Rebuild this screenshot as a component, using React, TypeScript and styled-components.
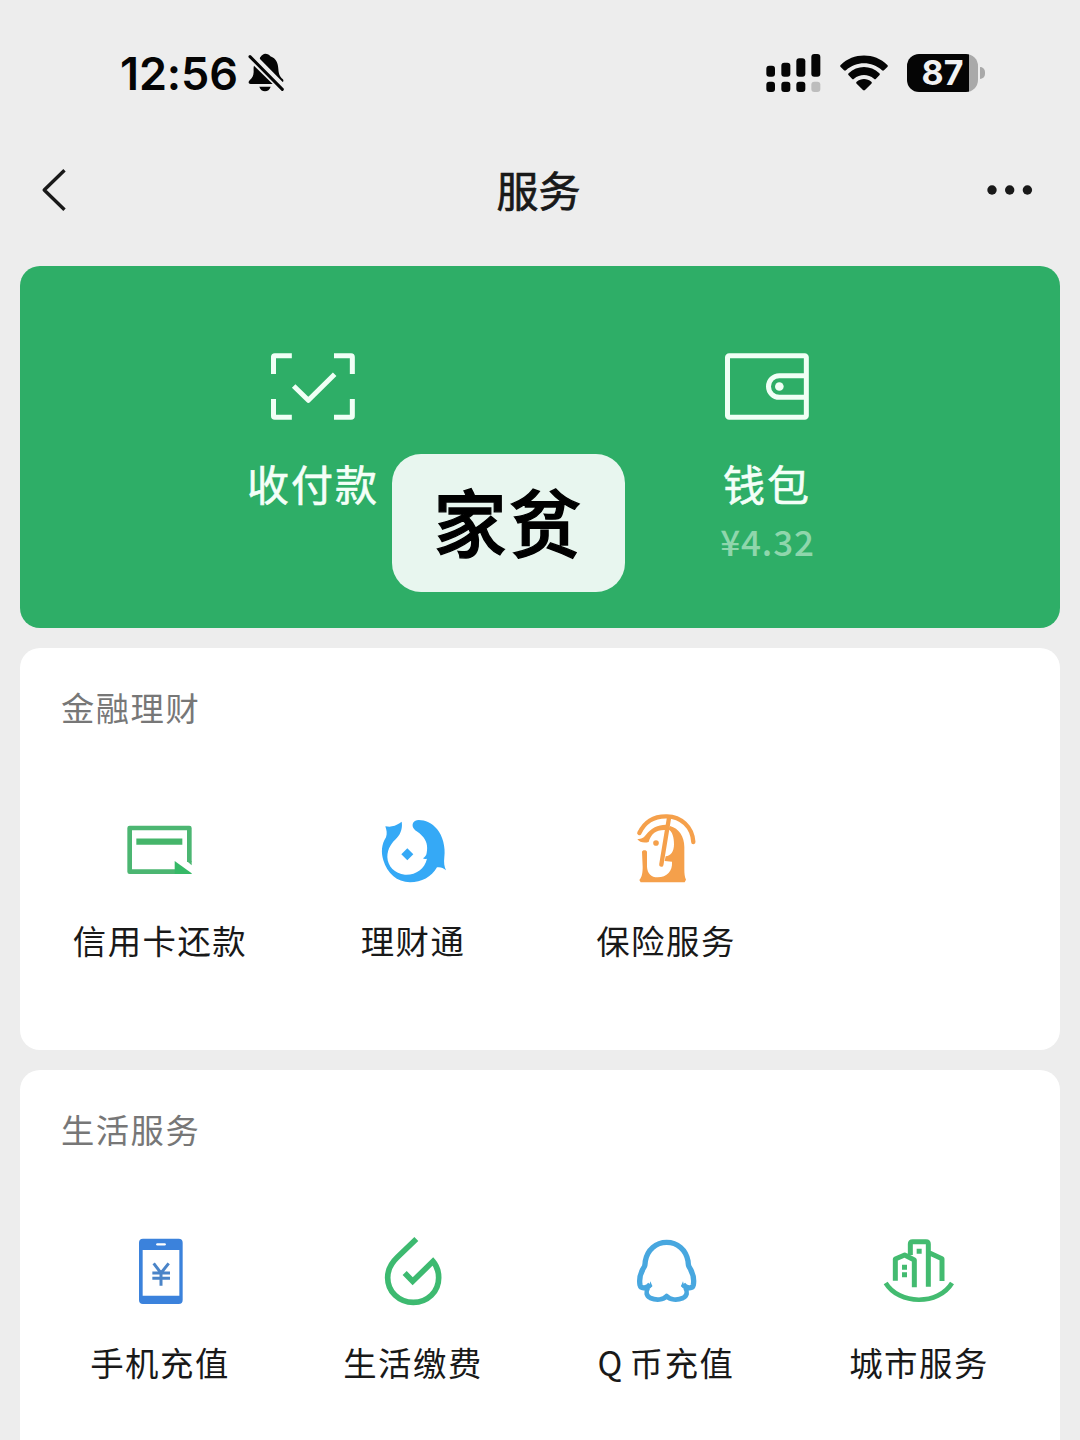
import React from "react";
import styled, { createGlobalStyle } from "styled-components";

const GlobalStyle = createGlobalStyle`
  * { box-sizing: border-box; }
  body {
    margin: 0;
    background: #ededed;
    font-family: "Noto Sans CJK SC", "Noto Sans", sans-serif;
    color: #191919;
  }
  svg { display: block; overflow: visible; flex: none; }
`;

const Screen = styled.main`
  width: 1080px;
  height: 1440px;
  overflow: hidden;
  background: #ededed;
  display: flex;
  flex-direction: column;
`;

const StatusBar = styled.header`
  flex: none;
  height: 146px;
  padding: 0 95px 0 120px;
  display: flex;
  align-items: center;
  justify-content: space-between;
  color: #050505;
`;

const StatusGroup = styled.div<{ $gap: number }>`
  display: flex;
  align-items: center;
  gap: ${(p) => p.$gap}px;
`;

const Clock = styled.span`
  width: 117px;
  font: 600 45px/50px Inter, sans-serif;
  letter-spacing: -0.1px;
  white-space: nowrap;
  margin-top: 2px;
`;

const Battery = styled.div`
  display: flex;
  align-items: center;
  gap: 2px;
`;

const BatteryBody = styled.div`
  width: 71px;
  height: 38px;
  border-radius: 12px;
  background: linear-gradient(to right, #050505 62px, #a9a9a9 62px);
  color: #f2f2f2;
  font: 700 34px/38px Inter, sans-serif;
  text-align: center;
`;

const BatteryTip = styled.div`
  width: 5px;
  height: 12px;
  border-radius: 0 6px 6px 0;
  background: #a9a9a9;
`;

const NavBar = styled.nav`
  flex: none;
  height: 120px;
  padding: 0 47px 32px 41px;
  display: grid;
  grid-template-columns: 60px 1fr 60px;
  align-items: center;
`;

const NavSlot = styled.div<{ $end?: boolean }>`
  display: flex;
  justify-content: ${(p) => (p.$end ? "flex-end" : "flex-start")};
`;

const Title = styled.h1`
  margin: 0;
  padding: 0 0 2px 3px;
  text-align: center;
  font-size: 42px;
  font-weight: 400;
  line-height: 60px;
  -webkit-text-stroke: 0.7px currentColor;
`;

const Cards = styled.div`
  flex: none;
  padding: 0 20px;
  display: flex;
  flex-direction: column;
  gap: 20px;
`;

const PayCard = styled.section`
  position: relative;
  height: 362px;
  padding: 86px 66px 0;
  border-radius: 20px;
  background: #2eae67;
  display: grid;
  grid-template-columns: 1fr 1fr;
`;

const PayItem = styled.div`
  display: flex;
  flex-direction: column;
  align-items: center;
  color: #f4fff8;
`;

const PayLabel = styled.span`
  margin-top: 32px;
  font-size: 42px;
  font-weight: 400;
  line-height: 60px;
  letter-spacing: 2px;
  -webkit-text-stroke: 0.6px currentColor;
`;

const Balance = styled.span`
  font-size: 35px;
  font-weight: 500;
  line-height: 56px;
  letter-spacing: 0.9px;
  margin-right: -1px;
  color: #8fd6ac;
`;

const Sticker = styled.div`
  position: absolute;
  left: 372px;
  top: 188px;
  width: 233px;
  height: 138px;
  border-radius: 29px;
  background: #e8f6ef;
  color: #000;
  font-size: 73px;
  font-weight: 500;
  line-height: 130px;
  letter-spacing: 2px;
  text-align: center;
  -webkit-text-stroke: 1.3px currentColor;
`;

const ServiceCard = styled.section<{ $height: number }>`
  height: ${(p) => p.$height}px;
  border-radius: 20px;
  background: #fff;
  padding: 35px 15px 0 13px;
`;

const SectionTitle = styled.h2`
  margin: 0 0 0 28px;
  font-size: 33.3px;
  font-weight: 400;
  line-height: 48px;
  letter-spacing: 1.5px;
  color: #777;
`;

const ServiceGrid = styled.div`
  display: grid;
  grid-template-columns: repeat(4, 1fr);
  padding-top: 69px;
`;

const Service = styled.div`
  display: flex;
  flex-direction: column;
  align-items: center;
  gap: 21px;
`;

const ServiceIcon = styled.div`
  height: 95px;
  display: flex;
  align-items: flex-start;
`;

const ServiceLabel = styled.span`
  font-size: 33.4px;
  line-height: 48px;
  letter-spacing: 1.5px;
  margin-right: -1px;
  word-spacing: -3px;
  white-space: nowrap;
`;

const BellOff = () => (
  <svg width="38" height="40" viewBox="0 0 114 120" fill="#050505">
    <path d="M52 2c7 0 12 3 15 8 18 7 23 20 24 38 1 17 5 23 13 30 3 3 3 7 0 9L36 18c-1-3 0-5 2-7 4-5 8-9 14-9Z" />
    <path d="M18 38 74 93H8c-7 0-8-7-3-11 8-7 11-13 12-25 0-8-1-13 1-19ZM34 101h34c-3 9-9 14-17 14s-14-5-17-14Z" />
    <path d="M6 11 103 109" fill="none" stroke="#050505" strokeWidth="9" strokeLinecap="round" />
  </svg>
);

const Signal = () => (
  <svg width="55" height="38" viewBox="0 0 165 114" fill="#050505">
    <rect x="1" y="35" width="26" height="33" rx="9" />
    <rect x="46" y="26" width="27" height="42" rx="9" />
    <rect x="91" y="13" width="27" height="55" rx="9" />
    <rect x="136" y="0" width="27" height="68" rx="9" />
    <rect x="1" y="83" width="26" height="31" rx="9" />
    <rect x="46" y="83" width="27" height="31" rx="9" />
    <rect x="91" y="83" width="27" height="31" rx="9" />
    <rect x="136" y="83" width="27" height="31" rx="9" fill="#bdbdbd" />
  </svg>
);

const Wifi = () => (
  <svg width="48" height="36" viewBox="0 0 144 108" fill="#050505">
    <path d="M2 30C40-8 104-8 142 30c2 2 2 4 0 6L132 46c-2 2-4 2-6 0-31-28-77-28-108 0-2 2-4 2-6 0L2 36c-2-2-2-4 0-6Z" />
    <path d="M26 55c26-25 66-25 92 0 2 2 2 4 0 6l-10 10c-2 2-4 2-6 0-18-15-42-15-60 0-2 2-4 2-6 0L26 61c-2-2-2-4 0-6Z" />
    <path d="M50 80c13-11 31-11 44 0 2 2 2 4 0 6L75 105c-2 2-4 2-6 0L50 86c-2-2-2-4 0-6Z" />
  </svg>
);

const Back = () => (
  <svg width="25" height="42" viewBox="0 0 25 42" fill="none" stroke="#191919" strokeWidth="3.4">
    <path d="M23.5 1.2 3.2 21 23.5 40.8" strokeLinejoin="round" />
  </svg>
);

const More = () => (
  <svg width="46" height="10" viewBox="0 0 46 10" fill="#191919">
    <circle cx="5" cy="5" r="4.7" />
    <circle cx="22.7" cy="5" r="4.7" />
    <circle cx="40.4" cy="5" r="4.7" />
  </svg>
);

const ScanPay = () => (
  <svg width="84" height="69" viewBox="0 0 252 207" fill="none" stroke="#f0fff6" strokeWidth="15" strokeLinejoin="round">
    <path d="M7.5 66V15q0-4 4-4h51M189 11h51q4 0 4 4v51M7.5 141v51q0 4 4 4h51M189 196h51q4 0 4-4v-51" />
    <path d="m68 102 44 43 79-78" strokeWidth="15" />
  </svg>
);

const Wallet = () => (
  <svg width="84" height="69" viewBox="0 0 252 207" fill="none" stroke="#f0fff6" strokeWidth="15">
    <rect x="7.5" y="11" width="236.5" height="185" rx="5" />
    <path d="M244 71h-81a32.5 32.5 0 0 0 0 65h81" />
    <circle cx="163" cy="103.5" r="13" fill="#f0fff6" stroke="none" />
  </svg>
);

const CreditCard = () => (
  <svg width="120" height="90" viewBox="0 0 360 270" fill="none" stroke="#4cb672" strokeWidth="14">
    <path d="M268 186V84H89v131h160" strokeLinejoin="round" />
    <path d="M261 184h14v12Z" fill="#4cb672" stroke="none" />
    <path d="M109 125h138" stroke="#45b56a" strokeWidth="19" />
    <path d="M224 183 275 220v2h-51Z" fill="#36b967" stroke="none" />
  </svg>
);

const Licaitong = () => (
  <svg width="100" height="100" viewBox="-4 0 300 300" fill="#35a9f6">
    <path d="M112 65C104 71 94 77 83 79 75 81 69 79 63 79 67 91 69 101 65 112 51 134 50 158 57 181 68 219 98 247 137 247 172 247 201 231 218 202 228 200 236 203 245 211 240 200 238 189 240 171 244 142 235 107 218 87 203 69 183 60 163 60 148 61 141 72 147 84 153 94 165 97 173 107 187 121 191 138 187 159 186 166 182 171 176 175 179 177 183 177 188 176 181 207 153 226 122 224 91 221 70 199 69 171 69 144 83 128 98 113 111 100 115 80 112 65Z" />
    <path d="m129 145 18 18-18 18-18-18Z" />
  </svg>
);

const Insurance = () => (
  <svg width="95" height="95" viewBox="-4 0 285 285" fill="none" stroke="#f5a04b" strokeLinecap="round" strokeLinejoin="round">
    <path d="M60 99C77 63 105 48 143 49c42 1 76 31 79 77" strokeWidth="13" />
    <path d="M149 54 126 194" strokeWidth="13" />
    <path
      d="M54 117c13 0 19-4 26-13 16-21 37-31 63-30l-2 16c-30-2-46 11-53 36-14 4-28 1-34-9Z"
      fill="#f5a04b" stroke="none"
    />
    <path
      d="M152 78c27 7 43 33 43 63v66c0 14 1 23 5 32l-4 8H64l-4-7c9-11 10-24 10-40l-2-44c0-7 15-7 15 0v44c1 20 12 32 32 32 28-1 45-18 43-47l-22-2 3-14c15-1 25-14 25-36 0-22-5-38-17-45Z"
      fill="#f5a04b" stroke="none"
    />
    <circle cx="110" cy="129" r="8.500" fill="#f5a04b" stroke="none" />
  </svg>
);

const PhoneTopUp = () => (
  <svg width="80" height="90" viewBox="-1 -9 240 270" fill="none">
    <path d="M68 41h107q12 0 12 12v172q0 12-12 12H68q-12 0-12-12V53q0-12 12-12ZM67 75v137h110V75Z" fill="#3b82dc" fillRule="evenodd" />
    <path d="M111 58h22" stroke="#fff" strokeWidth="7" strokeLinecap="round" />
    <path d="m100 115 22 29 23-29M122 144v38M96 144h53M96 160h53" stroke="#4a84c8" strokeWidth="9" />
  </svg>
);

const Utilities = () => (
  <svg width="90" height="90" viewBox="-6 -9 270 270" fill="none" stroke="#3dba70" strokeWidth="17">
    <path d="M139 42 82 97C60 118 53 137 53 158c0 42 34 74 77 74s76-32 76-74c0-20-6-36-17-49l-61 60-24-25" />
  </svg>
);

const Penguin = () => (
  <svg width="90" height="90" viewBox="3 -9 270 270" fill="none" stroke="#48a7df" strokeWidth="16" strokeLinejoin="round">
    <path d="M91 178c-9 12-28 15-31 2-3-17 2-38 13-55 3-6 2-10 3-17 6-34 32-56 64-56s58 22 64 56c1 7 0 11 3 17 11 17 16 38 13 55-3 13-22 10-31-2" />
    <path d="M84 189c-8 11-5 24 7 30 18 8 39 6 49-6 10 12 31 14 49 6 12-6 15-19 7-30" strokeWidth="14" />
    <path d="m91 169 6 14-12 9ZM189 169l-6 14 12 9Z" fill="#48a7df" stroke="none" />
  </svg>
);

const City = () => (
  <svg width="100" height="90" viewBox="-2 -9 300 270" fill="none" stroke="#43bb70" strokeWidth="15" strokeLinejoin="round">
    <path d="M77 167v-65l28-12 29 15v82M122 90V57q0-7 7-7h40q7 0 7 7v128M180 84l37 17v67" />
    <path d="M48 174c40 66 158 68 199 0" strokeWidth="14" />
    <path d="M141 71h15v15h-15ZM97 119h15v15H97ZM97 142h15v15H97Z" fill="#43bb70" stroke="none" />
  </svg>
);

const finance = [
  { label: "信用卡还款", icon: <CreditCard /> },
  { label: "理财通", icon: <Licaitong /> },
  { label: "保险服务", icon: <Insurance /> },
];

const life = [
  { label: "手机充值", icon: <PhoneTopUp /> },
  { label: "生活缴费", icon: <Utilities /> },
  { label: "Q 币充值", icon: <Penguin /> },
  { label: "城市服务", icon: <City /> },
];

type Entry = { label: string; icon: React.ReactNode };

function Section({ title, items, height }: { title: string; items: Entry[]; height: number }) {
  return (
    <ServiceCard $height={height}>
      <SectionTitle>{title}</SectionTitle>
      <ServiceGrid>
        {items.map((item) => (
          <Service key={item.label}>
            <ServiceIcon>{item.icon}</ServiceIcon>
            <ServiceLabel>{item.label}</ServiceLabel>
          </Service>
        ))}
      </ServiceGrid>
    </ServiceCard>
  );
}

export default function App() {
  return (
    <Screen>
      <GlobalStyle />
      <StatusBar>
        <StatusGroup $gap={11}>
          <Clock>12:56</Clock>
          <BellOff />
        </StatusGroup>
        <StatusGroup $gap={19}>
          <Signal />
          <Wifi />
          <Battery>
            <BatteryBody>87</BatteryBody>
            <BatteryTip />
          </Battery>
        </StatusGroup>
      </StatusBar>
      <NavBar>
        <NavSlot><Back /></NavSlot>
        <Title>服务</Title>
        <NavSlot $end><More /></NavSlot>
      </NavBar>
      <Cards>
        <PayCard>
          <PayItem>
            <ScanPay />
            <PayLabel>收付款</PayLabel>
          </PayItem>
          <PayItem>
            <Wallet />
            <PayLabel>钱包</PayLabel>
            <Balance>¥4.32</Balance>
          </PayItem>
          <Sticker>家贫</Sticker>
        </PayCard>
        <Section title="金融理财" items={finance} height={402} />
        <Section title="生活服务" items={life} height={402} />
      </Cards>
    </Screen>
  );
}
